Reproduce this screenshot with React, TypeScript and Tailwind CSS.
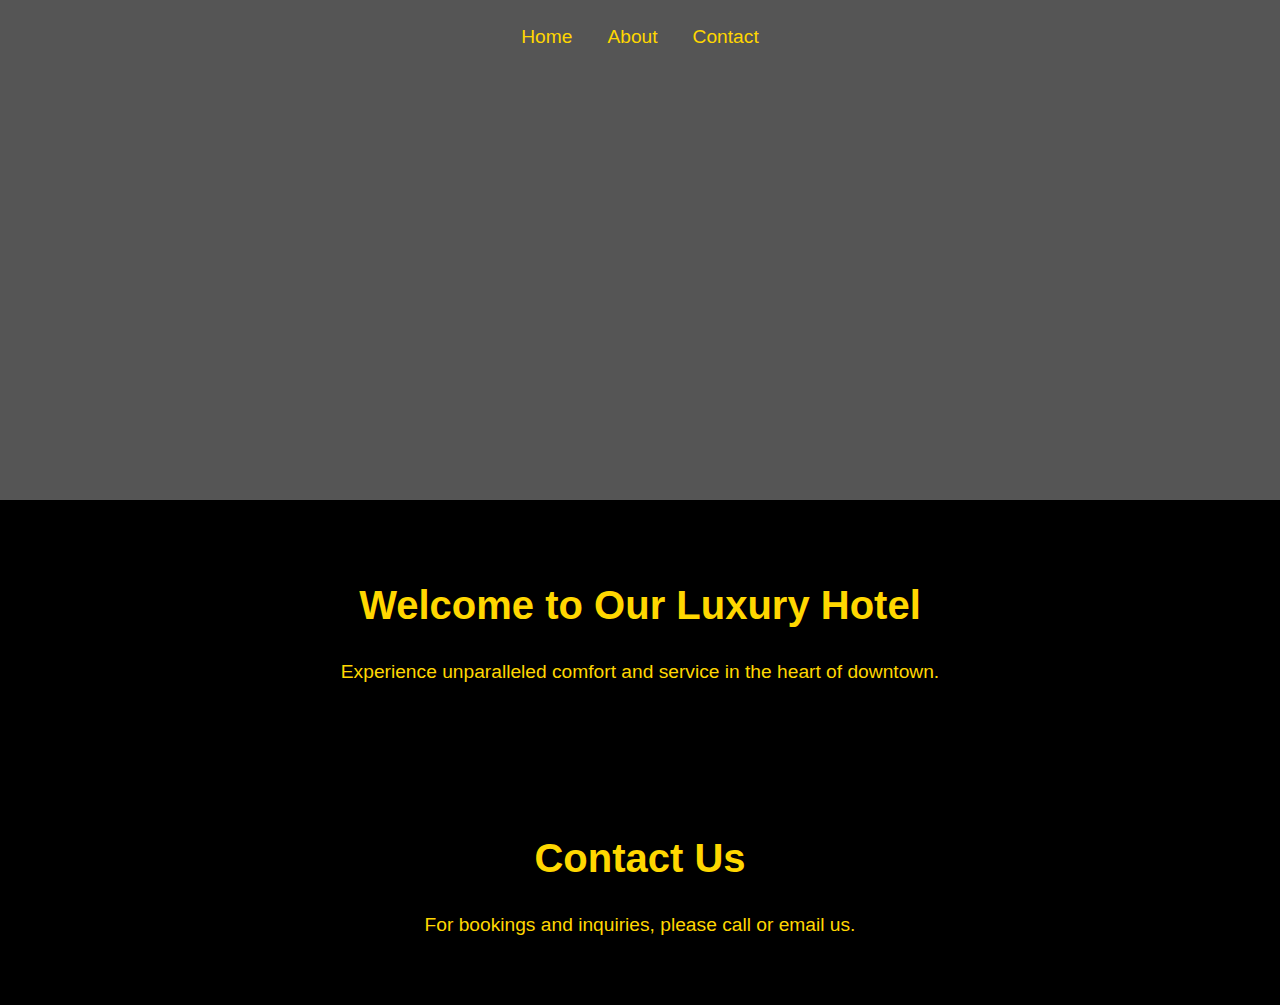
export default function App() {
  return (
    <div className="min-h-screen bg-black font-['Liberation_Sans',Arial,sans-serif] text-[#FFD700]">
      {/* Header / hero */}
      <header className="h-[500px] bg-[#555555]">
        <nav className="flex justify-center gap-[35px] pt-[26px] text-[19.2px] leading-[22px]">
          <a href="#" className="hover:underline">Home</a>
          <a href="#" className="hover:underline">About</a>
          <a href="#" className="hover:underline">Contact</a>
        </nav>
      </header>

      {/* Welcome */}
      <section className="pt-[82px] text-center">
        <h1 className="text-[40px] font-bold leading-[46px]">Welcome to Our Luxury Hotel</h1>
        <p className="mt-[33px] text-[19.2px] leading-[22px]">
          Experience unparalleled comfort and service in the heart of downtown.
        </p>
      </section>

      {/* Contact */}
      <section className="pt-[152px] pb-[60px] text-center">
        <h2 className="text-[40px] font-bold leading-[46px]">Contact Us</h2>
        <p className="mt-[33px] text-[19.2px] leading-[22px]">
          For bookings and inquiries, please call or email us.
        </p>
      </section>
    </div>
  );
}
